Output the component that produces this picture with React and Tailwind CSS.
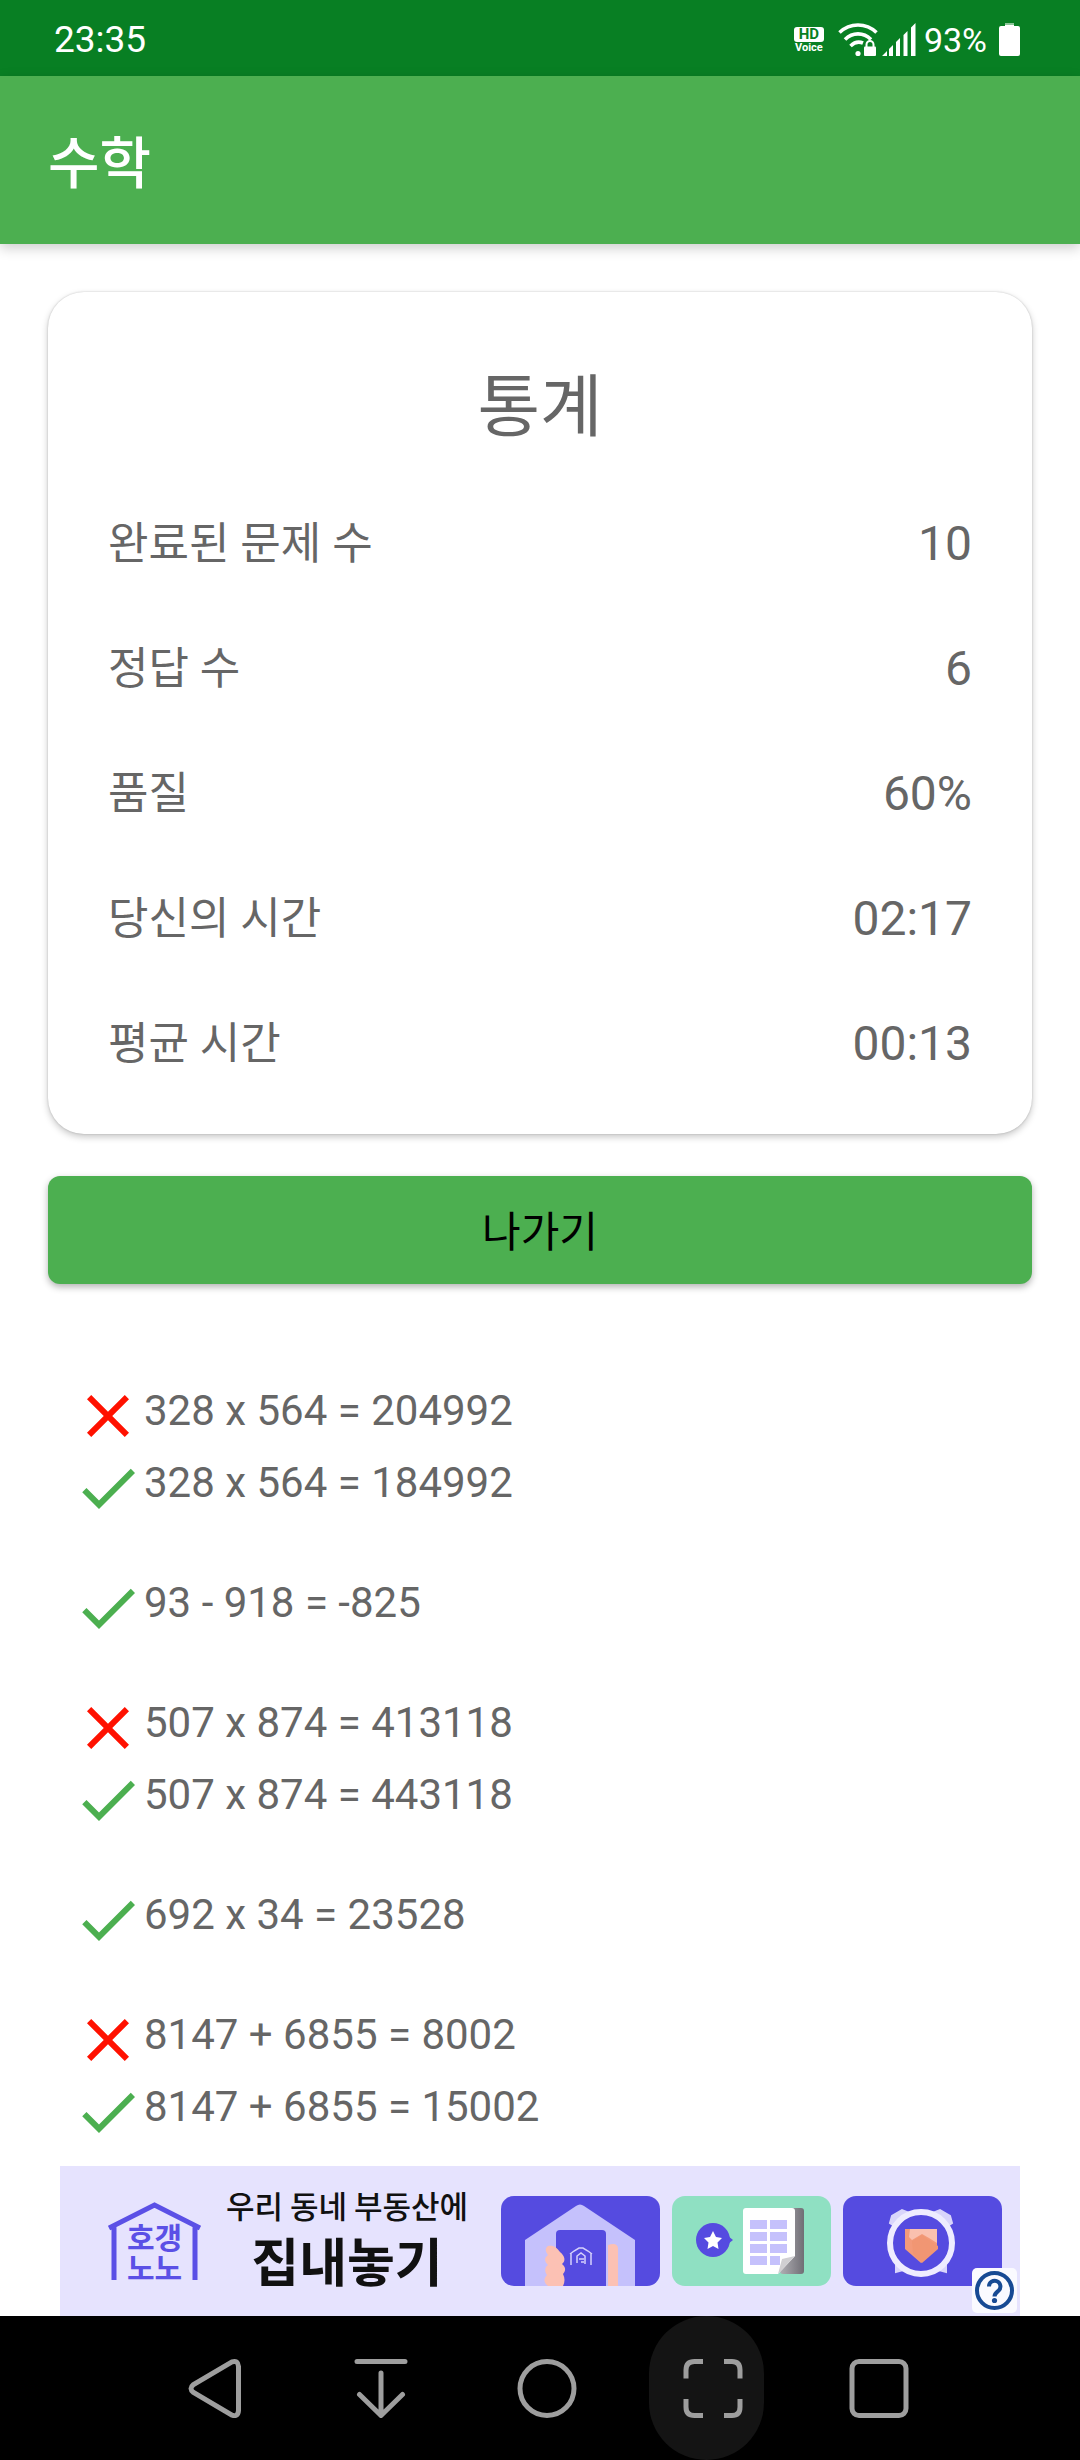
import React from 'react';

const stats = [
  ['완료된 문제 수', '10'],
  ['정답 수', '6'],
  ['품질', '60%'],
  ['당신의 시간', '02:17'],
  ['평균 시간', '00:13'],
];

const answers = [
  [
    { ok: false, text: '328 x 564 = 204992' },
    { ok: true, text: '328 x 564 = 184992' },
  ],
  [{ ok: true, text: '93 - 918 = -825' }],
  [
    { ok: false, text: '507 x 874 = 413118' },
    { ok: true, text: '507 x 874 = 443118' },
  ],
  [{ ok: true, text: '692 x 34 = 23528' }],
  [
    { ok: false, text: '8147 + 6855 = 8002' },
    { ok: true, text: '8147 + 6855 = 15002' },
  ],
];

function StatusBar() {
  return (
    <div className="flex h-[76px] items-center justify-between bg-[#087f23] pr-[60px] pl-[54px] pt-1 text-white">
      <span className="text-[37px] leading-[44px]">23:35</span>
      <div className="flex items-center">
        <div className="flex w-[30px] flex-col items-center">
          <span className="w-full rounded-[3px] bg-white text-center text-[15px] leading-[15px] font-bold text-[#087f23]">HD</span>
          <span className="text-[11px] leading-[12px] font-bold">Voice</span>
        </div>
        <svg className="ml-[14px] h-[34px] w-[40px]" viewBox="0 0 40 34" fill="none" stroke="#fff" strokeWidth="3.6" aria-label="Wi-Fi">
          <path d="M1.5 9.5C12 -0.5 28 -0.5 38.500 9.500" />
          <path d="M7 16.500C14.500 9 25.500 9 33 16.500" />
          <path d="M12.500 23C16.500 19 21.500 18.500 25 20" />
          <circle cx="20" cy="30.500" r="2.600" fill="#fff" stroke="none" />
          <rect x="26" y="23.500" width="12" height="9.500" rx="1" fill="#fff" stroke="none" />
          <path d="M28.500 24v-2.500a3.500 3.500 0 0 1 7 0V24" strokeWidth="2" />
        </svg>
        <svg className="ml-1 h-[34px] w-[34px]" viewBox="0 0 34 34" fill="#fff" aria-label="Signal">
          <path d="M0 33l5-5v5zM7 26l4-4v11H7zM14 19l4-4v18h-4zM21.500 12l4-4v25h-4zM29 4.500L33.500 0v33H29z" />
        </svg>
        <span className="ml-2 text-[34px] leading-[40px]">93%</span>
        <svg className="ml-3 h-[34px] w-[21px]" viewBox="0 0 21 34" aria-label="Battery">
          <rect x="6" y="0" width="9" height="4" fill="#8cc598" />
          <path d="M2 3h4V2h9v1h4a2 2 0 0 1 2 2v26a2 2 0 0 1-2 2H2a2 2 0 0 1-2-2V5a2 2 0 0 1 2-2z" fill="#fff" />
        </svg>
      </div>
    </div>
  );
}

function ResultIcon({ ok }) {
  return ok ? (
    <svg className="size-[72px] shrink-0" viewBox="0 0 24 24" fill="#4caf50" role="img" aria-label="정답">
      <path d="M9 16.170L4.830 12l-1.420 1.410L9 19 21 7l-1.410-1.410z" />
    </svg>
  ) : (
    <svg className="size-[72px] shrink-0" viewBox="0 0 24 24" fill="#ff1100" role="img" aria-label="오답">
      <path d="M19 6.410L17.590 5 12 10.590 6.410 5 5 6.410 10.590 12 5 17.590 6.410 19 12 13.410 17.590 19 19 17.590 13.410 12z" />
    </svg>
  );
}

function HouseTile() {
  return (
    <svg className="h-[90px] w-[159px]" viewBox="0 0 159 90" aria-hidden="true">
      <rect width="159" height="90" rx="13" fill="#554be0" />
      <path d="M24 90V44L75 10q4-3 8 0l51 34v46z" fill="#c5c1fc" />
      <path d="M55 90V38q0-4 4-4h42q4 0 4 4v52z" fill="#554be0" />
      <path d="M107 49q10-3 10 4v37h-10z" fill="#fcc1b4" />
      <path d="M47 50c6-1 9 2 12 6 5 4 6 9 2 12 4 3 4 7 1 10 2 4 2 8 0 12H47c-5-4-4-8-1-11-3-4-2-8 1-10-4-4-4-7 0-10-3-4-3-7 0-9z" fill="#fcc1b4" />
      <path d="M70 69V57M69 58l4-3 5-3h4l5 3 4 3M90 69V57M76 67V60l4-3 4 3v8M78 63h5M80 66h3" fill="none" stroke="#d5d1fb" strokeWidth="1.500" />
    </svg>
  );
}

function DocumentTile() {
  return (
    <svg className="h-[90px] w-[159px]" viewBox="0 0 159 90" aria-hidden="true">
      <defs>
        <linearGradient id="page-edge" x1="0" x2="1">
          <stop offset="0" stopColor="#b0afb4" />
          <stop offset="1" stopColor="#706e75" />
        </linearGradient>
      </defs>
      <rect width="159" height="90" rx="13" fill="#8fe0c2" />
      <rect x="108" y="12" width="24" height="66" rx="3" fill="url(#page-edge)" />
      <path d="M74 12h46q3 0 3 3v45l-17 18H74q-3 0-3-3V15q0-3 3-3z" fill="#fff" />
      <path d="M106 78l4-15 13-3z" fill="#d0cfd2" />
      <path d="M78 24h17v9H78zM98 24h17v9H98zM78 36h17v9H78zM98 36h17v9H98zM78 48h17v9H78zM98 48h17v9H98zM78 60h17v9H78zM98 60h10v9H98z" fill="#c5c1fc" />
      <circle cx="41" cy="44" r="17" fill="#554be0" />
      <path d="M56 40l5 4-5 4z" fill="#554be0" />
      <path d="M41 35l3 6 6 1-4.500 4.500 1 6.500-5.500-3-5.500 3 1-6.500L32 42l6-1z" fill="#fff" />
    </svg>
  );
}

function HandshakeTile() {
  return (
    <svg className="h-[90px] w-[159px]" viewBox="0 0 159 90" aria-hidden="true">
      <rect width="159" height="90" rx="13" fill="#554be0" />
      <path d="M47 27l2-7 10-6 5 2-14 13zM109 27l-2-7-10-6-5 2 14 13z" fill="#d9d5fb" stroke="#d9d5fb" strokeWidth="2" />
      <path d="M53 69v7l7-2zM103 69v7l-7-2z" fill="#d9d5fb" stroke="#d9d5fb" strokeWidth="2" />
      <circle cx="78" cy="47" r="31" fill="#554be0" stroke="#eeecff" strokeWidth="6" />
      <path d="M62 33h32v20L78 67 62 53z" fill="#f39a7a" />
      <path d="M67 33h27v14l-8-5-7-4-10 6-3-3z" fill="#fac0af" />
      <path d="M69 45l10-6 16 11v3L79 67l-9-9z" fill="#f19673" />
    </svg>
  );
}

function AdBanner() {
  return (
    <a href="#ad" className="relative mx-[60px] mt-[18px] flex h-[150px] items-center justify-between bg-[#e6e3fe] pr-[18px] pl-[48px] font-['Noto_Sans_CJK_KR',sans-serif]">
      <div className="relative h-[78px] w-[93px]">
        <svg className="h-[78px] w-[93px]" viewBox="0 0 93 78" fill="none" stroke="#5b50e6" strokeWidth="5" aria-hidden="true">
          <path d="M1 26L46.500 3 92 26M6 24v54M87 24v54" />
        </svg>
        <span className="absolute inset-x-0 top-[19px] text-center text-[30px] leading-[30px] font-bold text-[#5b50e6]">
          호갱<br />노노
        </span>
      </div>
      <div className="flex flex-col items-center pr-2 pb-[2px] whitespace-nowrap text-[#111]">
        <span className="text-[31px] leading-[40px] font-medium">우리 동네 부동산에</span>
        <span className="text-[52px] leading-[70px] font-bold">집내놓기</span>
      </div>
      <div className="flex gap-3">
        <HouseTile />
        <DocumentTile />
        <HandshakeTile />
      </div>
      <span className="absolute right-[3px] bottom-[3px] flex size-[45px] items-center justify-center rounded-[5px] bg-[#fafaff]">
        <svg className="size-[39px]" viewBox="0 0 39 39" fill="none" stroke="#174a94" strokeWidth="4" role="img" aria-label="광고 정보">
          <circle cx="19.500" cy="19.500" r="17.500" />
          <path d="M14 15.500a5.700 5.700 0 1 1 9.500 4.200c-2.200 1.900-4 3-4 5.800" />
          <circle cx="19.500" cy="29.500" r="2.600" fill="#174a94" stroke="none" />
        </svg>
      </span>
    </a>
  );
}

function NavButton({ label, active, children }) {
  return (
    <button type="button" aria-label={label} className="flex h-[144px] w-[166px] items-center justify-center">
      <span className={active ? 'flex h-[144px] w-[115px] items-center justify-center rounded-full bg-[#141414] pl-[14px]' : 'flex h-[144px] w-[115px] items-center justify-center pl-[14px]'}>
        <svg className="size-[60px]" viewBox="0 0 60 60" fill="none" stroke="#9e9e9e" strokeWidth="5">
          {children}
        </svg>
      </span>
    </button>
  );
}

function NavBar() {
  return (
    <nav className="flex h-[144px] justify-center bg-black">
      <NavButton label="뒤로">
        <path d="M47 3.800L8.500 26.500q-5 4 0 8L47 57.200q6 2 6.500-4.700V8.500Q53 2 47 3.800z" />
      </NavButton>
      <NavButton label="내리기">
        <path d="M6 3.500h48M30 15v40M8.500 36.500L30 57.500 51.500 36.500" strokeLinecap="round" strokeLinejoin="round" />
      </NavButton>
      <NavButton label="홈">
        <circle cx="30" cy="30.500" r="27" />
      </NavButton>
      <NavButton label="화면 캡처" active>
        <path d="M3 20.500V12q0-8.500 8.500-8.500H20M41 3.500h8q8 0 8 8.500v8.500M57 41v8q0 8.500-8 8.500h-8M20 57.500h-8.500Q3 57.500 3 49v-8" />
      </NavButton>
      <NavButton label="최근 앱">
        <rect x="3" y="3.500" width="54" height="54" rx="7" />
      </NavButton>
    </nav>
  );
}

export default function App() {
  return (
    <div className="flex min-h-screen flex-col bg-white font-['Roboto','Noto_Sans_CJK_KR',sans-serif] text-[#666]">
      <StatusBar />
      <header className="flex h-[168px] items-center bg-[#4caf50] px-[48px] pt-2 shadow-[0_4px_12px_rgba(0,0,0,0.2)]">
        <h1 className="text-[56px] leading-[80px] font-medium text-white">수학</h1>
      </header>
      <main className="flex-1">
        <section className="mx-[48px] mt-[48px] rounded-[36px] bg-white px-[60px] pt-[52px] pb-[28px] shadow-[0_3px_7px_rgba(0,0,0,0.22),0_0_2px_rgba(0,0,0,0.2)]">
          <h2 className="pb-[9px] text-center text-[68px] leading-[128px] font-normal">통계</h2>
          <dl>
            {stats.map(([label, value]) => (
              <div key={label} className="flex h-[125px] items-center justify-between">
                <dt className="text-[44px] leading-[64px]">{label}</dt>
                <dd className="text-[48px] leading-[64px]">{value}</dd>
              </div>
            ))}
          </dl>
        </section>
        <div className="px-[48px] pt-[42px]">
          <button type="button" className="h-[108px] w-full rounded-[12px] bg-[#4caf50] pt-[6px] text-[42px] leading-[60px] font-normal text-black shadow-[0_3px_7px_rgba(0,0,0,0.3)]">
            나가기
          </button>
        </div>
        <div className="flex flex-col gap-[48px] px-[72px] pt-[96px]">
          {answers.map((group) => (
            <ul key={group[0].text}>
              {group.map((a) => (
                <li key={a.text} className="flex h-[72px] items-start">
                  <ResultIcon ok={a.ok} />
                  <span className="text-[42px] leading-[62px]">{a.text}</span>
                </li>
              ))}
            </ul>
          ))}
        </div>
        <AdBanner />
      </main>
      <NavBar />
    </div>
  );
}
